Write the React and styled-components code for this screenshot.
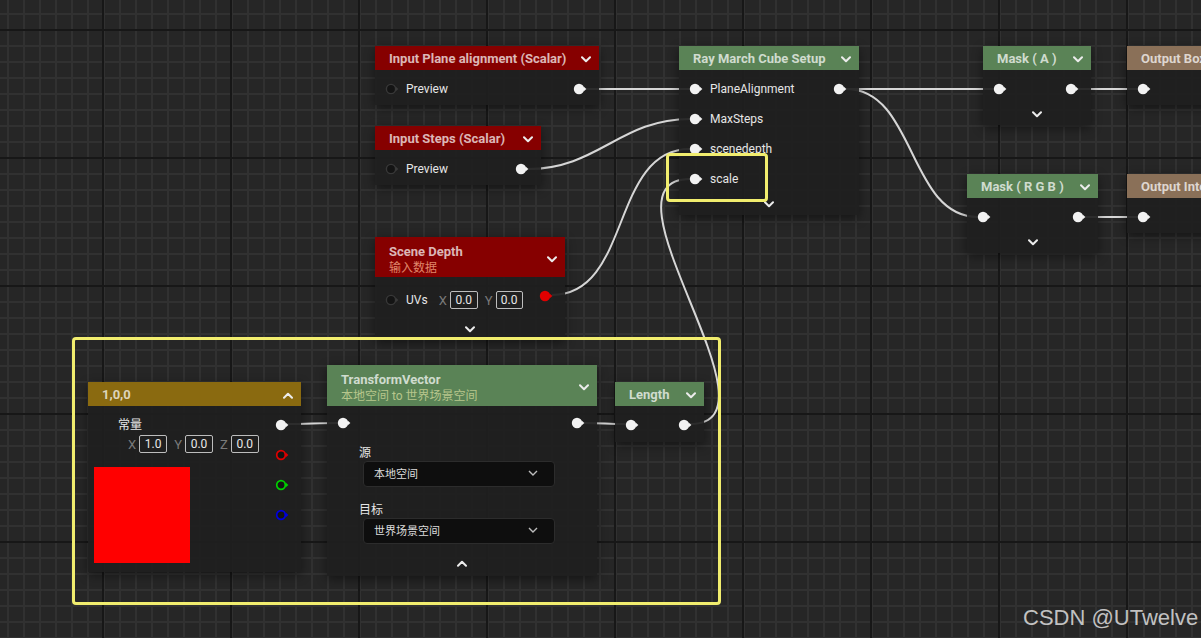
import React from "react";
import styled, { createGlobalStyle } from "styled-components";

const GlobalStyle = createGlobalStyle`
  html, body { margin: 0; padding: 0; background: #262626; }
  body { font-family: Roboto, "Noto Sans CJK SC", sans-serif; }
`;

const RED = "#860000";
const GREEN = "#5a8356";
const GOLD = "#8a6a10";
const BROWN = "#8a7058";

const Canvas = styled.div`
  position: relative;
  width: 1201px;
  height: 638px;
  overflow: hidden;
  background-color: #262626;
  background-image:
    linear-gradient(to right, #171717 2px, transparent 2px),
    linear-gradient(to bottom, #171717 2px, transparent 2px),
    linear-gradient(to right, #313131 2px, transparent 2px),
    linear-gradient(to bottom, #313131 2px, transparent 2px);
  background-size: 128px 128px, 128px 128px, 16px 16px, 16px 16px;
  background-position: 102px 0, 0 29px, 7px 0, 0 13px;
  font-family: Roboto, "Noto Sans CJK SC", sans-serif;
`;

const WireLayer = styled.svg`
  position: absolute;
  left: 0;
  top: 0;
  pointer-events: none;
`;

const Node = styled.div`
  position: absolute;
  left: ${(p) => p.$x}px;
  top: ${(p) => p.$y}px;
  width: ${(p) => p.$w}px;
  box-shadow: 0 3px 10px rgba(0, 0, 0, 0.45);
`;

const Header = styled.div`
  height: ${(p) => p.$h || 24}px;
  background: ${(p) => p.$color};
  display: flex;
  align-items: center;
  justify-content: space-between;
  padding: ${(p) => p.$pt ?? 2}px 8px 0 14px;
  box-sizing: border-box;
  white-space: nowrap;
  overflow: hidden;
`;

const TitleBlock = styled.div`
  display: flex;
  flex-direction: column;
`;

const Title = styled.div`
  font-size: 13px;
  font-weight: 700;
  line-height: 16px;
  color: rgba(255, 255, 255, 0.72);
`;

const Subtitle = styled.div`
  font-size: 12px;
  line-height: 16px;
  color: ${(p) => p.$color};
`;

const Body = styled.div`
  background: rgba(31, 31, 31, 0.93);
  padding: ${(p) => p.$pt ?? 4}px 0 ${(p) => p.$pb ?? 1}px;
`;

const PinArea = styled.div`
  display: flex;
  justify-content: space-between;
`;

const Col = styled.div`
  display: flex;
  flex-direction: column;
  padding-top: ${(p) => p.$pt || 0}px;
`;

const InRow = styled.div`
  height: ${(p) => p.$h || 30}px;
  display: flex;
  align-items: center;
  gap: 7px;
  padding-left: 10px;
`;

const OutRow = styled.div`
  height: 30px;
  display: flex;
  align-items: center;
  justify-content: flex-end;
  padding-right: 12px;
`;

const PinLabel = styled.span`
  font-size: 12px;
  color: #e6e6e6;
  white-space: nowrap;
`;

const Footer = styled.div`
  height: 20px;
  display: flex;
  align-items: center;
  justify-content: center;
  margin-top: ${(p) => p.$mt || 0}px;
`;

const VecFields = styled.div`
  display: flex;
  align-items: center;
  gap: 7px;
  margin-left: ${(p) => p.$ml || 0}px;
  margin-top: ${(p) => p.$mt || 0}px;
`;

const Field = styled.div`
  display: flex;
  align-items: center;
  gap: 3px;
`;

const Axis = styled.span`
  font-size: 13px;
  color: #7a7a7a;
`;

const ValueBox = styled.div`
  width: ${(p) => p.$w || 27}px;
  height: 18px;
  box-sizing: border-box;
  border: 1px solid #bdbdbd;
  border-radius: 2px;
  font-size: 12px;
  color: #e8e8e8;
  display: flex;
  align-items: center;
  justify-content: center;
`;

const ConstLeft = styled.div`
  display: flex;
  flex-direction: column;
  padding: 11px 0 9px 6px;
`;

const ConstLabel = styled.div`
  font-size: 12px;
  line-height: 16px;
  color: #e6e6e6;
  margin-left: 24px;
`;

const Swatch = styled.div`
  width: 96px;
  height: 96px;
  background: #ff0000;
  margin-top: 14px;
`;

const Section = styled.div`
  display: flex;
  flex-direction: column;
  padding-left: ${(p) => p.$pl || 0}px;
`;

const FieldLabel = styled.div`
  font-size: 12px;
  line-height: 16px;
  color: #e6e6e6;
  margin-top: ${(p) => p.$mt || 0}px;
`;

const Dropdown = styled.div`
  width: 192px;
  height: 26px;
  box-sizing: border-box;
  margin-left: 4px;
  background: #0e0e0e;
  border: 1px solid #2c2c2c;
  border-radius: 4px;
  display: flex;
  align-items: center;
  justify-content: space-between;
  padding: 0 16px 2px 10px;
  font-size: 11px;
  color: #dcdcdc;
`;

const Highlight = styled.div`
  position: absolute;
  left: ${(p) => p.$x}px;
  top: ${(p) => p.$y}px;
  width: ${(p) => p.$w}px;
  height: ${(p) => p.$h}px;
  box-sizing: border-box;
  border: 3px solid #f1ed6e;
  border-radius: 4px;
  pointer-events: none;
`;

const Watermark = styled.div`
  position: absolute;
  left: 1023px;
  top: 607px;
  font-family: "Liberation Sans", Arial, sans-serif;
  font-size: 22px;
  line-height: 22px;
  color: rgba(255, 255, 255, 0.72);
  white-space: nowrap;
`;

const PinSvg = styled.svg`
  display: block;
  flex: none;
`;

function Pin({ kind = "solid", color = "#f2f2f2" }) {
  const arrow = kind === "empty" ? "#3a3a3a" : color;
  return (
    <PinSvg width="14" height="12" viewBox="0 0 14 12">
      {kind === "solid" && <circle cx="6" cy="6" r="5.2" fill={color} />}
      {kind === "ring" && (
        <circle cx="6" cy="6" r="4.3" fill="#141414" stroke={color} strokeWidth="1.7" />
      )}
      {kind === "empty" && (
        <circle cx="6" cy="6" r="4.6" fill="#141414" stroke="#383838" strokeWidth="1.4" />
      )}
      <path d="M10.6 3.6 L13.4 6 L10.6 8.4 Z" fill={arrow} />
    </PinSvg>
  );
}

function Chevron({ up, color = "#ececec", w = 10 }) {
  return (
    <PinSvg width={w} height="7" viewBox="0 0 10 7">
      <path
        d={up ? "M1 5.8 L5 1.8 L9 5.8" : "M1 1.2 L5 5.2 L9 1.2"}
        stroke={color}
        strokeWidth="2"
        fill="none"
        strokeLinecap="round"
        strokeLinejoin="round"
      />
    </PinSvg>
  );
}

function DropChevron() {
  return (
    <PinSvg width="10" height="6" viewBox="0 0 10 6">
      <path d="M1 1 L5 5 L9 1" stroke="#bdbdbd" strokeWidth="1.4" fill="none" />
    </PinSvg>
  );
}

const wires = [
  [586, 89, 690, 89, 40],
  [528, 169, 690, 119, 70],
  [552, 295, 690, 149, 80],
  [690, 424, 690, 179, 100],
  [846, 89, 995, 89, 40],
  [846, 89, 978, 217, 70],
  [1078, 89, 1138, 89, 20],
  [1084, 217, 1138, 217, 20],
  [287, 424, 338, 423, 20],
  [584, 423, 626, 424, 20],
];

function Wires() {
  return (
    <WireLayer width="1201" height="638" viewBox="0 0 1201 638">
      {wires.map(([x1, y1, x2, y2, t], i) => (
        <path
          key={i}
          d={`M${x1} ${y1} C${x1 + t} ${y1} ${x2 - t} ${y2} ${x2} ${y2}`}
          stroke="#d6d6d6"
          strokeWidth="2"
          fill="none"
        />
      ))}
    </WireLayer>
  );
}

function SimpleHeader({ color, title, chevron = true, up }) {
  return (
    <Header $color={color}>
      <Title>{title}</Title>
      {chevron && <Chevron up={up} />}
    </Header>
  );
}

function Vec({ values, ml, mt, widths }) {
  const axes = ["X", "Y", "Z"];
  return (
    <VecFields $ml={ml} $mt={mt}>
      {values.map((v, i) => (
        <Field key={i}>
          <Axis>{axes[i]}</Axis>
          <ValueBox $w={widths ? widths[i] : 28}>{v}</ValueBox>
        </Field>
      ))}
    </VecFields>
  );
}

export default function App() {
  return (
    <>
      <GlobalStyle />
      <Canvas>
        <Wires />

        <Node $x={375} $y={46} $w={224}>
          <SimpleHeader color={RED} title="Input Plane alignment (Scalar)" />
          <Body>
            <PinArea>
              <Col>
                <InRow>
                  <Pin kind="empty" />
                  <PinLabel>Preview</PinLabel>
                </InRow>
              </Col>
              <Col>
                <OutRow>
                  <Pin />
                </OutRow>
              </Col>
            </PinArea>
          </Body>
        </Node>

        <Node $x={375} $y={126} $w={166}>
          <SimpleHeader color={RED} title="Input Steps (Scalar)" />
          <Body>
            <PinArea>
              <Col>
                <InRow>
                  <Pin kind="empty" />
                  <PinLabel>Preview</PinLabel>
                </InRow>
              </Col>
              <Col>
                <OutRow>
                  <Pin />
                </OutRow>
              </Col>
            </PinArea>
          </Body>
        </Node>

        <Node $x={679} $y={46} $w={180}>
          <SimpleHeader color={GREEN} title="Ray March Cube Setup" />
          <Body>
            <PinArea>
              <Col>
                {["PlaneAlignment", "MaxSteps", "scenedepth", "scale"].map((n) => (
                  <InRow key={n}>
                    <Pin />
                    <PinLabel>{n}</PinLabel>
                  </InRow>
                ))}
              </Col>
              <Col>
                <OutRow>
                  <Pin />
                </OutRow>
              </Col>
            </PinArea>
            <Footer>
              <Chevron />
            </Footer>
          </Body>
        </Node>

        <Node $x={983} $y={46} $w={108}>
          <SimpleHeader color={GREEN} title="Mask ( A )" />
          <Body>
            <PinArea>
              <Col>
                <InRow>
                  <Pin />
                </InRow>
              </Col>
              <Col>
                <OutRow>
                  <Pin />
                </OutRow>
              </Col>
            </PinArea>
            <Footer>
              <Chevron />
            </Footer>
          </Body>
        </Node>

        <Node $x={1127} $y={46} $w={150}>
          <SimpleHeader color={BROWN} title="Output Box" chevron={false} />
          <Body>
            <PinArea>
              <Col>
                <InRow>
                  <Pin />
                </InRow>
              </Col>
            </PinArea>
          </Body>
        </Node>

        <Node $x={967} $y={174} $w={131}>
          <SimpleHeader color={GREEN} title="Mask ( R G B )" />
          <Body>
            <PinArea>
              <Col>
                <InRow>
                  <Pin />
                </InRow>
              </Col>
              <Col>
                <OutRow>
                  <Pin />
                </OutRow>
              </Col>
            </PinArea>
            <Footer>
              <Chevron />
            </Footer>
          </Body>
        </Node>

        <Node $x={1127} $y={174} $w={150}>
          <SimpleHeader color={BROWN} title="Output Inte" chevron={false} />
          <Body>
            <PinArea>
              <Col>
                <InRow>
                  <Pin />
                </InRow>
              </Col>
            </PinArea>
          </Body>
        </Node>

        <Node $x={375} $y={237} $w={190}>
          <Header $color={RED} $h={40} $pt={5}>
            <TitleBlock>
              <Title>Scene Depth</Title>
              <Subtitle $color="#e0866a">输入数据</Subtitle>
            </TitleBlock>
            <Chevron />
          </Header>
          <Body>
            <PinArea>
              <Col>
                <InRow $h={38}>
                  <Pin kind="empty" />
                  <PinLabel>UVs</PinLabel>
                  <Vec values={["0.0", "0.0"]} ml={4} widths={[28, 27]} />
                </InRow>
              </Col>
              <Col>
                <OutRow>
                  <Pin color="#e00000" />
                </OutRow>
              </Col>
            </PinArea>
            <Footer>
              <Chevron />
            </Footer>
          </Body>
        </Node>

        <Node $x={88} $y={382} $w={213}>
          <SimpleHeader color={GOLD} title="1,0,0" up />
          <Body $pt={0} $pb={0}>
            <PinArea>
              <ConstLeft>
                <ConstLabel>常量</ConstLabel>
                <Vec values={["1.0", "0.0", "0.0"]} ml={34} mt={2} />
                <Swatch />
              </ConstLeft>
              <Col $pt={4}>
                <OutRow>
                  <Pin />
                </OutRow>
                <OutRow>
                  <Pin kind="ring" color="#e00000" />
                </OutRow>
                <OutRow>
                  <Pin kind="ring" color="#00d000" />
                </OutRow>
                <OutRow>
                  <Pin kind="ring" color="#0000e0" />
                </OutRow>
              </Col>
            </PinArea>
          </Body>
        </Node>

        <Node $x={327} $y={365} $w={270}>
          <Header $color={GREEN} $h={41} $pt={4}>
            <TitleBlock>
              <Title>TransformVector</Title>
              <Subtitle $color="#b7c68c">本地空间 to 世界场景空间</Subtitle>
            </TitleBlock>
            <Chevron />
          </Header>
          <Body $pt={2} $pb={3}>
            <PinArea>
              <Col>
                <InRow>
                  <Pin />
                </InRow>
              </Col>
              <Col>
                <OutRow>
                  <Pin />
                </OutRow>
              </Col>
            </PinArea>
            <Section $pl={32}>
              <FieldLabel $mt={7}>源</FieldLabel>
              <Dropdown>
                <span>本地空间</span>
                <DropChevron />
              </Dropdown>
              <FieldLabel $mt={15}>目标</FieldLabel>
              <Dropdown>
                <span>世界场景空间</span>
                <DropChevron />
              </Dropdown>
            </Section>
            <Footer $mt={9}>
              <Chevron up />
            </Footer>
          </Body>
        </Node>

        <Node $x={615} $y={382} $w={89}>
          <SimpleHeader color={GREEN} title="Length" />
          <Body $pb={2}>
            <PinArea>
              <Col>
                <InRow>
                  <Pin />
                </InRow>
              </Col>
              <Col>
                <OutRow>
                  <Pin />
                </OutRow>
              </Col>
            </PinArea>
          </Body>
        </Node>

        <Highlight $x={72} $y={337} $w={649} $h={268} />
        <Highlight $x={666} $y={153} $w={102} $h={49} />

        <Watermark>CSDN @UTwelve</Watermark>
      </Canvas>
    </>
  );
}
